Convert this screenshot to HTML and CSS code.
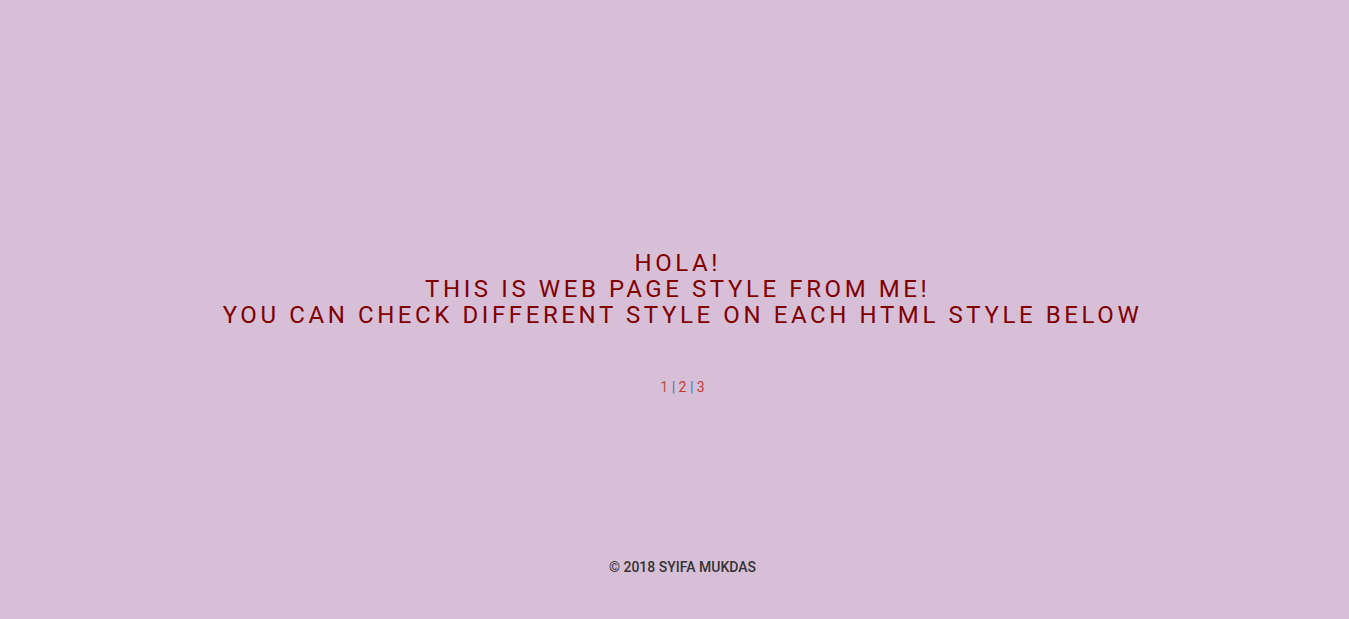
FILE: index.html
```html
<!DOCTYPE html>
<html>
<head>
<meta charset="utf-8">
<link rel="stylesheet" href="styles.css">
</head>
<body>
<main class="hero">
  <h1 class="title">HOLA!&nbsp;<br>THIS IS WEB PAGE STYLE FROM ME!&nbsp;<br>YOU CAN CHECK DIFFERENT STYLE ON EACH HTML STYLE BELOW</h1>
  <p class="pages"><a class="visited" href="#">1</a> <span class="sep">|</span> <a href="#">2</a> <span class="sep">|</span> <a href="#">3</a></p>
</main>
<footer class="footer">© 2018 SYIFA MUKDAS</footer>
</body>
</html>
```
FILE: styles.css
```css
html, body {
  margin: 0;
  padding: 0;
  background: #d8bfd8;
  font-family: Roboto, "Liberation Sans", sans-serif;
}
body {
  padding-left: 16px;
}
.hero {
  padding-top: 250px;
  text-align: center;
}
.title {
  margin: 0;
  font-size: 24px;
  line-height: 26px;
  font-weight: 400;
  letter-spacing: 3.6px;
  color: #800000;
}
.pages {
  margin: 51px 0 0;
  font-size: 14px;
  line-height: 16px;
}
.pages a {
  color: #c0392b;
  text-decoration: none;
}
.pages a.visited {
  color: #b5533a;
}
.sep {
  color: #2980b9;
}
.footer {
  margin-top: 164px;
  text-align: center;
  font-size: 14px;
  line-height: 16px;
  font-weight: 500;
  color: #333;
}
```
